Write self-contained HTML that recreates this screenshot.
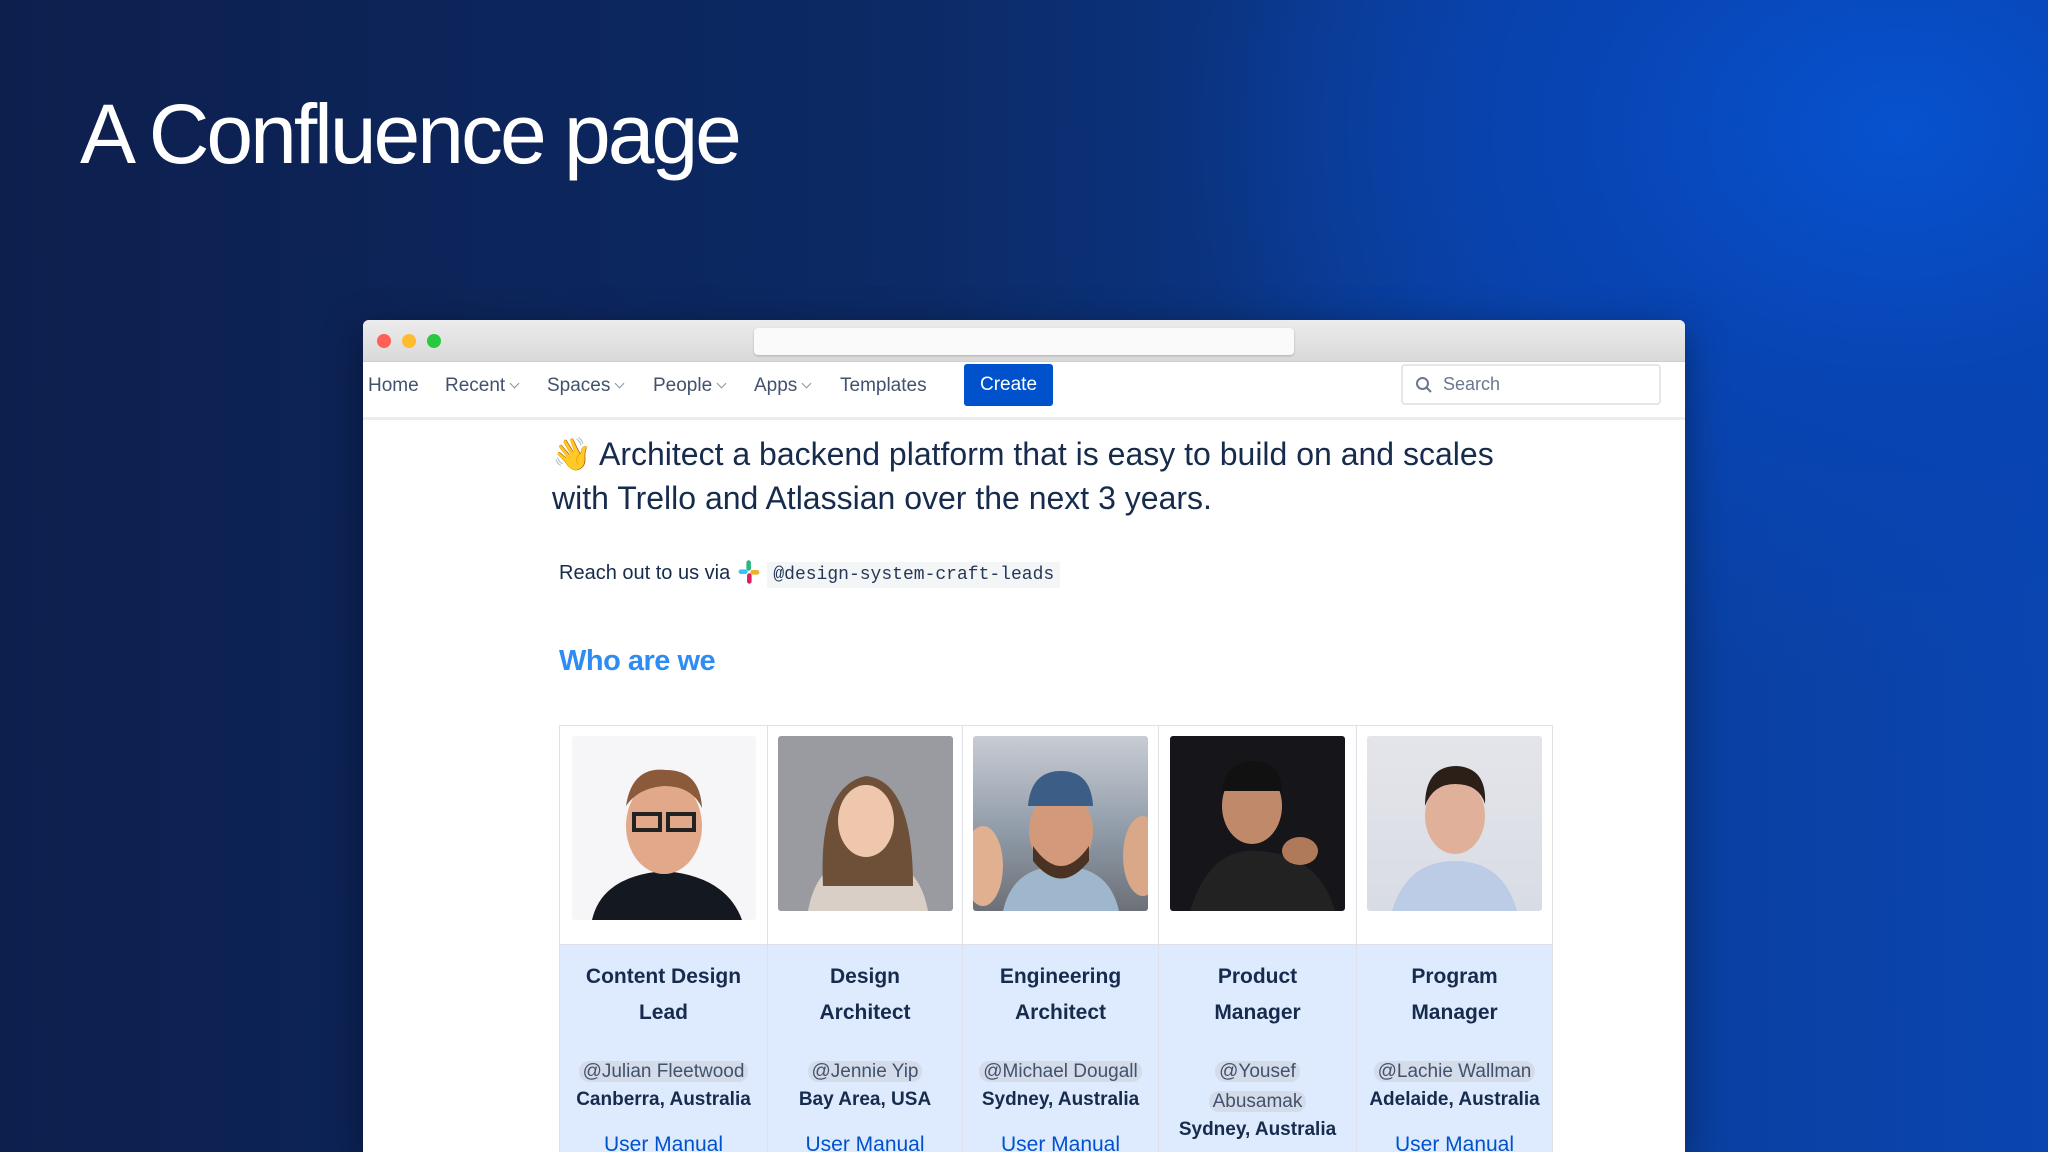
<!DOCTYPE html>
<html><head><meta charset="utf-8"><style>
*{margin:0;padding:0;box-sizing:border-box}
html,body{width:2048px;height:1152px;overflow:hidden}
body{position:relative;font-family:"Liberation Sans",sans-serif;
background:radial-gradient(ellipse 900px 700px at 1900px 130px,#0752cf 0%,#0845b4 35%,rgba(8,60,150,0) 80%),linear-gradient(90deg,#0d1f4d 0%,#0c2a66 45%,#0a3d9a 75%,#0a45b0 100%);}
.title{position:absolute;left:80px;top:86px;color:#fff;font-size:84px;letter-spacing:-3px;font-weight:normal}
.win{position:absolute;left:363px;top:320px;width:1322px;height:832px;background:#fff;border-radius:6px 6px 0 0;overflow:hidden;box-shadow:0 10px 40px rgba(0,0,0,.4)}
.tb{height:42px;background:linear-gradient(#ececec,#d9d9d9);position:relative;border-bottom:1px solid #cfcfcf}
.dot{position:absolute;top:14px;width:14px;height:14px;border-radius:50%}
.url{position:absolute;left:391px;top:8px;width:540px;height:27px;background:#fafafa;border-radius:4px;box-shadow:0 1px 2px rgba(0,0,0,.2)}
.nav{height:58px;border-bottom:3px solid #ececec;position:relative;font-size:19px;color:#42526e}
.nav span{position:absolute;top:13px}
.chev{display:inline-block;width:7px;height:7px;border-right:1.5px solid #8993a4;border-bottom:1.5px solid #8993a4;transform:rotate(45deg);margin-left:6px;position:relative;top:-4px}
.create{position:absolute;left:601px;top:2px;width:89px;height:42px;background:#0052cc;border-radius:3px;color:#fff;text-align:center;line-height:42px;font-size:19px}
.search{position:absolute;left:1038px;top:2px;width:260px;height:41px;border:2px solid #e4e6ea;border-radius:4px;color:#6b778c;font-size:18px;padding-left:40px;line-height:37px}
.h{position:absolute;left:189px;top:112px;font-size:32px;line-height:44px;color:#172b4d;width:975px}
.reach{position:absolute;left:196px;top:239px;font-size:20px;color:#172b4d}
.code{font-family:"Liberation Mono",monospace;font-size:18px;background:#f4f5f7;padding:3px 6px;color:#253858}
.who{position:absolute;left:196px;top:325px;font-size:29px;color:#2f8cf3;font-weight:bold;letter-spacing:-0.5px}
table{position:absolute;left:196px;top:405px;border-collapse:collapse;font-size:19px;color:#172b4d}
td{border:1.5px solid #dfe1e6;vertical-align:top;text-align:center}
.ph td{height:219px;background:#fff}
.inf td{background:#deebff;padding-top:14px}
.inf b{display:block;font-size:21px;line-height:36px;margin-bottom:26px}
.m{background:#d4dcea;border-radius:10px;padding:0 4px;color:#42526e;line-height:30px}
.loc{font-weight:bold;line-height:26px;display:block}
.um{color:#0052cc;font-size:21px;display:block;margin-top:20px}
.pic{margin:10px auto 0;border-radius:3px;overflow:hidden;position:relative}
</style></head><body>
<div class="title">A Confluence page</div>
<div class="win">
 <div class="tb"><div class="dot" style="left:14px;background:#fe5f57"></div><div class="dot" style="left:39px;background:#febc2e"></div><div class="dot" style="left:64px;background:#28c840"></div><div class="url"></div></div>
 <div class="nav">
  <span style="left:5px">Home</span>
  <span style="left:82px">Recent<i class="chev"></i></span>
  <span style="left:184px">Spaces<i class="chev"></i></span>
  <span style="left:290px">People<i class="chev"></i></span>
  <span style="left:391px">Apps<i class="chev"></i></span>
  <span style="left:477px">Templates</span>
  <div class="create">Create</div>
  <div class="search"><svg style="position:absolute;left:12px;top:10px" width="18" height="18" viewBox="0 0 18 18"><circle cx="7.5" cy="7.5" r="5.5" fill="none" stroke="#6b778c" stroke-width="2"/><path d="M11.5 11.5L16 16" stroke="#6b778c" stroke-width="2"/></svg>Search</div>
 </div>
 <div class="h">👋 Architect a backend platform that is easy to build on and scales with Trello and Atlassian over the next 3 years.</div>
 <div class="reach">Reach out to us via <svg width="26" height="26" viewBox="0 0 20 20" style="vertical-align:-6px"><rect x="2" y="8" width="7" height="3.5" rx="1.7" fill="#36c5f0"/><rect x="8" y="1" width="3.5" height="8" rx="1.7" fill="#2eb67d"/><rect x="11" y="8.5" width="7" height="3.5" rx="1.7" fill="#ecb22e"/><rect x="8.5" y="11" width="3.5" height="8" rx="1.7" fill="#e01e5a"/></svg> <span class="code">@design-system-craft-leads</span></div>
 <div class="who">Who are we</div>
 <table>
  <tr class="ph">
   <td style="width:208px"><div class="pic" style="width:184px;height:184px;background:#f6f6f8"><svg width="184" height="184"><path d="M20 184Q30 140 92 135Q154 140 170 184Z" fill="#141820"/><ellipse cx="92" cy="90" rx="38" ry="48" fill="#e2a88a"/><path d="M54 70Q60 30 94 34Q128 34 130 72Q120 50 92 50Q66 52 54 70Z" fill="#8a5a3a"/><rect x="62" y="78" width="26" height="16" fill="none" stroke="#222" stroke-width="4"/><rect x="96" y="78" width="26" height="16" fill="none" stroke="#222" stroke-width="4"/></svg></div></td>
   <td style="width:195px"><div class="pic" style="width:175px;height:175px;background:#9a9ba0"><svg width="175" height="175"><path d="M30 175Q40 120 88 120Q140 120 150 175Z" fill="#d9cfc6"/><path d="M45 150Q40 50 88 40Q135 45 135 150Z" fill="#6e5038"/><ellipse cx="88" cy="85" rx="28" ry="36" fill="#efc7ac"/></svg></div></td>
   <td style="width:196px"><div class="pic" style="width:175px;height:175px;background:linear-gradient(#c8ccd4,#8f9ba8 55%,#6d7077)"><svg width="175" height="175"><path d="M30 175Q40 130 88 130Q136 130 146 175Z" fill="#9fb7cc"/><ellipse cx="88" cy="95" rx="32" ry="40" fill="#d29a7a"/><path d="M60 110Q88 150 116 110L116 125Q88 160 60 125Z" fill="#4a3322"/><path d="M55 70Q58 35 88 35Q118 35 120 70Z" fill="#3b5d86"/><ellipse cx="10" cy="130" rx="20" ry="40" fill="#e0b090"/><ellipse cx="170" cy="120" rx="20" ry="40" fill="#d9a888"/></svg></div></td>
   <td style="width:198px"><div class="pic" style="width:175px;height:175px;background:#15151a"><svg width="175" height="175"><path d="M20 175Q40 110 90 115Q150 120 165 175Z" fill="#222"/><ellipse cx="82" cy="70" rx="30" ry="38" fill="#c08a6a"/><path d="M52 55Q55 25 85 25Q112 28 112 55Z" fill="#111"/><ellipse cx="130" cy="115" rx="18" ry="14" fill="#b07a5a"/></svg></div></td>
   <td style="width:196px"><div class="pic" style="width:175px;height:175px;background:linear-gradient(#e4e5ea,#d8dce4)"><svg width="175" height="175"><path d="M25 175Q40 125 88 125Q136 125 150 175Z" fill="#bccbe6"/><ellipse cx="88" cy="80" rx="30" ry="38" fill="#e1b09a"/><path d="M58 70Q58 30 90 30Q120 32 118 68Q112 48 88 48Q66 48 58 70Z" fill="#2b1f18"/></svg></div></td>
  </tr>
  <tr class="inf">
   <td><b>Content Design<br>Lead</b><span class="m">@Julian Fleetwood</span><span class="loc">Canberra, Australia</span><span class="um">User Manual</span></td>
   <td><b>Design<br>Architect</b><span class="m">@Jennie Yip</span><span class="loc">Bay Area, USA</span><span class="um">User Manual</span></td>
   <td><b>Engineering<br>Architect</b><span class="m">@Michael Dougall</span><span class="loc">Sydney, Australia</span><span class="um">User Manual</span></td>
   <td><b>Product<br>Manager</b><span class="m">@Yousef</span><br><span class="m">Abusamak</span><span class="loc">Sydney, Australia</span></td>
   <td><b>Program<br>Manager</b><span class="m">@Lachie Wallman</span><span class="loc">Adelaide, Australia</span><span class="um">User Manual</span></td>
  </tr>
 </table>
</div>
</body></html>
